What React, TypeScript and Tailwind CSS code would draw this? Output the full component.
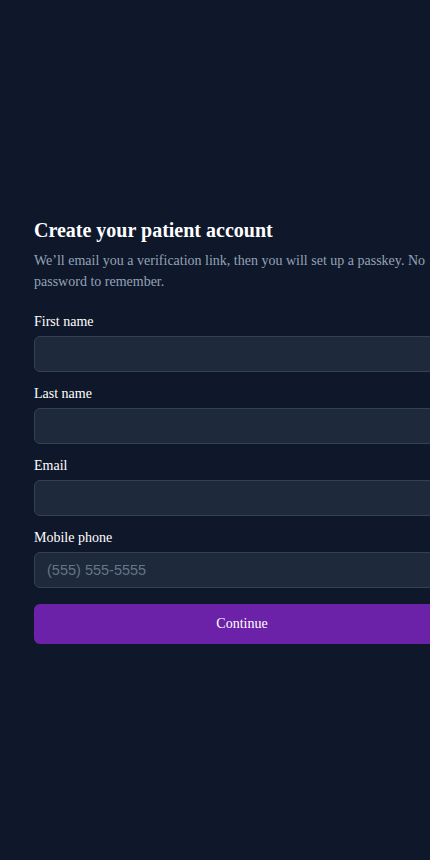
import React from "react";

interface FieldProps {
  id: string;
  label: string;
  type?: string;
  placeholder?: string;
}

const Field = ({ id, label, type = "text", placeholder }: FieldProps) => {
  return (
    <div className="flex flex-col">
      <label htmlFor={id} className="mb-1 text-sm leading-5 text-white">
        {label}
      </label>
      <input
        id={id}
        type={type}
        placeholder={placeholder}
        className="h-9 w-full rounded-md border border-[#334155] bg-[#1e293b] px-3 font-['Liberation_Sans',Arial,sans-serif] text-[14.5px] text-white outline-none placeholder:text-[#64748b]"
      />
    </div>
  );
};

export default function App() {
  return (
    <div className="flex min-h-screen w-full items-center overflow-hidden bg-[#0f172a] pl-[34px] font-['Liberation_Serif','Times_New_Roman',serif]">
      <div className="w-[416px] shrink-0">
        <h1 className="text-xl leading-7 font-bold text-white">
          Create your patient account
        </h1>
        <p className="mt-1.5 text-sm leading-[21px] text-[#94a3b8]">
          We’ll email you a verification link, then you will set up a passkey.
          No password to remember.
        </p>

        <form className="mt-5 flex flex-col gap-3" onSubmit={(e) => e.preventDefault()}>
          <Field id="first" label="First name" />
          <Field id="last" label="Last name" />
          <Field id="email" label="Email" type="email" />
          <Field id="phone" label="Mobile phone" type="tel" placeholder="(555) 555-5555" />
          <button
            type="submit"
            className="mt-1 h-10 w-full rounded-md bg-[#6b21a8] text-sm text-white"
          >
            Continue
          </button>
        </form>
      </div>
    </div>
  );
}
